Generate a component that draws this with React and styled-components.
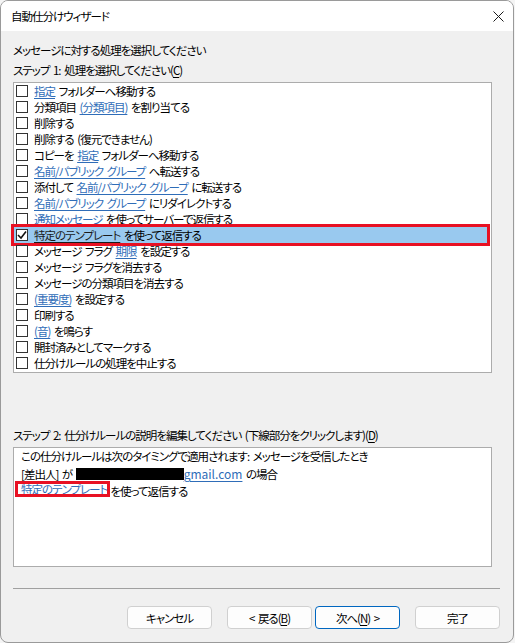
import React from "react";
import styled, { createGlobalStyle } from "styled-components";

const GlobalStyle = createGlobalStyle`
  html, body {
    margin: 0;
    padding: 0;
    background: #f4f4f4;
  }
  body {
    font-family: "Noto Sans CJK JP", "Noto Sans", sans-serif;
    font-size: 11.5px;
    letter-spacing: -1px;
    word-spacing: 2px;
    color: #000;
    font-feature-settings: "palt";
  }
`;

const actions = [
  "{指定} フォルダーへ移動する",
  "分類項目 {(分類項目)} を割り当てる",
  "削除する",
  "削除する (復元できません)",
  "コピーを {指定} フォルダーへ移動する",
  "{名前/パブリック グループ} へ転送する",
  "添付して {名前/パブリック グループ} に転送する",
  "{名前/パブリック グループ} にリダイレクトする",
  "{通知メッセージ} を使ってサーバーで返信する",
  "{特定のテンプレート} を使って返信する",
  "メッセージ フラグ {期限} を設定する",
  "メッセージ フラグを消去する",
  "メッセージの分類項目を消去する",
  "{(重要度)} を設定する",
  "印刷する",
  "{(音)} を鳴らす",
  "開封済みとしてマークする",
  "仕分けルールの処理を中止する",
];

const SELECTED = 9;

const renderText = (text, selected) =>
  text.split(/(\{[^}]*\})/).map((part, i) =>
    part.startsWith("{") ? (
      <Link key={i} $dark={selected}>
        {part.slice(1, -1)}
      </Link>
    ) : (
      <span key={i}>{part}</span>
    )
  );

const App = () => {
  return (
    <>
      <GlobalStyle />
      <Window>
        <TitleBar>
          <Title>自動仕分けウィザード</Title>
          <CloseIcon width="11" height="11" viewBox="0 0 11 11">
            <path d="M0.5 0.5 L10.5 10.5 M10.5 0.5 L0.5 10.5" stroke="#1a1a1a" strokeWidth="1" />
          </CloseIcon>
        </TitleBar>
        <Body>
          <Label>メッセージに対する処理を選択してください</Label>
          <Label $gap={4}>
            ステップ 1: 処理を選択してください(<u>C</u>)
          </Label>
          <ListBox>
            {actions.map((text, i) => (
              <Row key={i} $selected={i === SELECTED}>
                <Check>
                  {i === SELECTED && (
                    <svg width="10" height="10" viewBox="0 0 10 10">
                      <path d="M1 5 L4 8 L9 1.5" fill="none" stroke="#111" strokeWidth="1.6" />
                    </svg>
                  )}
                </Check>
                <RowText>{renderText(text, i === SELECTED)}</RowText>
              </Row>
            ))}
          </ListBox>
          <Label $gap={54}>
            ステップ 2: 仕分けルールの説明を編集してください (下線部分をクリックします)(<u>D</u>)
          </Label>
          <DescBox>
            <DescLine>この仕分けルールは次のタイミングで適用されます: メッセージを受信したとき</DescLine>
            <DescLine>
              [差出人] が <Redacted />
              <Link $latin>gmail.com</Link> の場合
            </DescLine>
            <DescLine>
              <Framed>
                <Link>特定のテンプレート</Link>
              </Framed>
              を使って返信する
            </DescLine>
          </DescBox>
          <Separator />
          <ButtonRow>
            <Button>キャンセル</Button>
            <Button $ml={15}>
              &lt; 戻る(<u>B</u>)
            </Button>
            <Button $ml={3} $focused>
              次へ(<u>N</u>) &gt;
            </Button>
            <Button $ml={15}>完了</Button>
          </ButtonRow>
        </Body>
      </Window>
    </>
  );
};

const Window = styled.div`
  box-sizing: border-box;
  width: 514px;
  height: 643px;
  border: 1px solid #9a9a9a;
  border-radius: 8px;
  overflow: hidden;
  background: #f0f0f0;
  display: flex;
  flex-direction: column;
`;

const TitleBar = styled.div`
  height: 30px;
  flex: none;
  background: #ffffff;
  display: flex;
  align-items: center;
  justify-content: space-between;
  padding: 0 9px 0 10px;
`;

const Title = styled.div`
  line-height: 16px;
`;

const CloseIcon = styled.svg`
  display: block;
`;

const Body = styled.div`
  flex: 1;
  display: flex;
  flex-direction: column;
  padding: 11px 13px 0 12px;
`;

const Label = styled.div`
  line-height: 16px;
  margin-top: ${(p) => p.$gap || 0}px;
  white-space: pre;
  u {
    text-underline-offset: 2px;
  }
`;

const ListBox = styled.div`
  box-sizing: border-box;
  margin: 4px 8px 0 0;
  height: 291px;
  background: #ffffff;
  border: 1px solid #acacac;
  display: flex;
  flex-direction: column;
`;

const Row = styled.div`
  height: 16px;
  display: flex;
  align-items: center;
  gap: 6px;
  padding-left: 2px;
  margin-right: 4px;
  background: ${(p) => (p.$selected ? "#99c9ef" : "transparent")};
  outline: ${(p) => (p.$selected ? "3px solid #e81123" : "none")};
`;

const Check = styled.span`
  box-sizing: border-box;
  width: 12px;
  height: 12px;
  flex: none;
  border: 1px solid #333333;
  background: #ffffff;
  display: flex;
  align-items: center;
  justify-content: center;
`;

const RowText = styled.span`
  line-height: 16px;
  white-space: pre;
`;

const Link = styled.span`
  color: ${(p) => (p.$dark ? "#1a1a1a" : "#2f6db8")};
  text-decoration: underline;
  text-underline-offset: 2px;
  letter-spacing: ${(p) => (p.$latin ? "0" : "inherit")};
  font-size: ${(p) => (p.$latin ? "12px" : "inherit")};
`;

const DescBox = styled.div`
  box-sizing: border-box;
  margin: 4px 8px 0 0;
  height: 120px;
  background: #ffffff;
  border: 1px solid #acacac;
  padding: 0 0 0 7px;
`;

const DescLine = styled.div`
  line-height: 17px;
  white-space: pre;
`;

const Redacted = styled.span`
  display: inline-block;
  width: 108px;
  height: 12px;
  background: #000000;
  vertical-align: -1px;
`;

const Framed = styled.span`
  display: inline-block;
  line-height: 10px;
  height: 10px;
  padding-left: 3px;
  margin-left: -3px;
  margin-right: 3px;
  outline: 3px solid #e81123;
  vertical-align: 2px;
`;

const Separator = styled.div`
  margin-top: 21px;
  height: 0;
  border-top: 1px solid #a0a0a0;
`;

const ButtonRow = styled.div`
  margin-top: 17px;
  display: flex;
  justify-content: flex-end;
`;

const Button = styled.button`
  box-sizing: border-box;
  width: 85px;
  height: 23px;
  margin-left: ${(p) => p.$ml || 0}px;
  padding: 0;
  font-family: inherit;
  font-size: 11.5px;
  letter-spacing: -1px;
  word-spacing: 2px;
  font-feature-settings: "palt";
  color: #000;
  background: #fdfdfd;
  border: 1px solid ${(p) => (p.$focused ? "#0067c0" : "#d0d0d0")};
  border-radius: 4px;
  u {
    text-underline-offset: 2px;
  }
`;

export default App;
